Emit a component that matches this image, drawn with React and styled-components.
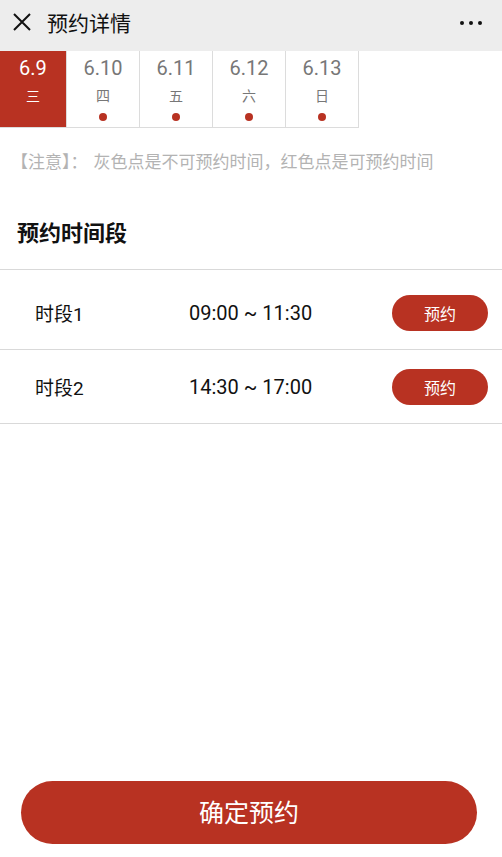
import React, { useState } from "react";
import styled, { createGlobalStyle } from "styled-components";

const Global = createGlobalStyle`
  html, body { margin: 0; padding: 0; background: #fff; }
  body {
    font-family: Roboto, "Noto Sans CJK SC", "Noto Sans", sans-serif;
    color: #111;
  }
`;

const RED = "#b83222";

const Page = styled.div`
  width: 502px;
  height: 857px;
  display: flex;
  flex-direction: column;
  background: #fff;
`;

const Header = styled.div`
  height: 51px;
  background: #ededed;
  display: flex;
  align-items: center;
  padding: 0 20px 8px 12px;
  box-sizing: border-box;
`;

const Close = styled.div`
  width: 20px;
  height: 20px;
  display: flex;
  margin-right: 15px;
`;

const Title = styled.div`
  font-size: 21px;
  color: #111;
  flex: 1;
`;

const More = styled.div`
  display: flex;
  gap: 5px;
  margin-top: 2px;
  span {
    width: 4px;
    height: 4px;
    border-radius: 50%;
    background: #111;
  }
`;

const Tabs = styled.div`
  display: flex;
`;

const Tab = styled.div`
  width: ${(p) => (p.first ? 66 : 72)}px;
  height: 76px;
  border-right: 1px solid #dcdcdc;
  border-bottom: 1px solid #dcdcdc;
  background: ${(p) => (p.active ? RED : "#fff")};
  color: ${(p) => (p.active ? "#fff" : "#777")};
  display: flex;
  flex-direction: column;
  align-items: center;
`;

const TabDate = styled.div`
  font-size: 20px;
  line-height: 24px;
  margin-top: 5px;
`;

const TabDay = styled.div`
  font-size: 14px;
  line-height: 16px;
  margin-top: 8px;
`;

const Dot = styled.div`
  width: 8px;
  height: 8px;
  border-radius: 50%;
  background: ${RED};
  margin-top: 9px;
`;

const Note = styled.div`
  font-family: "Noto Sans CJK SC", sans-serif;
  font-size: 17px;
  color: #b3b3b3;
  padding: 22px 0 0 11px;
  line-height: 22px;
  white-space: nowrap;
`;

const NoteLabel = styled.span`
  margin-right: 6px;
`;

const SectionTitle = styled.div`
  font-size: 22px;
  font-weight: bold;
  padding: 48px 0 0 17px;
  line-height: 28px;
  color: #111;
`;

const List = styled.div`
  margin-top: 21px;
  border-top: 1px solid #d9d9d9;
  padding-top: 6px;
`;

const Row = styled.div`
  height: 73px;
  border-bottom: 1px solid #d9d9d9;
  display: flex;
  align-items: center;
  font-size: 19px;
  color: #111;
`;

const RowName = styled.div`
  width: 154px;
  padding-left: 35px;
`;

const RowTime = styled.div`
  flex: 1;
  font-size: 20px;
`;

const SmallButton = styled.button`
  width: 96px;
  height: 36px;
  border: none;
  border-radius: 18px;
  background: ${RED};
  color: #fff;
  font-family: inherit;
  font-size: 16px;
  margin-right: 14px;
  padding: 0;
  cursor: pointer;
`;

const Spacer = styled.div`
  flex: 1;
`;

const Footer = styled.div`
  padding: 0 25px 13px 21px;
`;

const BigButton = styled.button`
  width: 100%;
  height: 63px;
  border: none;
  border-radius: 32px;
  background: ${RED};
  color: #fff;
  font-family: inherit;
  font-size: 25px;
  padding: 0 0 4px;
  cursor: pointer;
`;

const days = [
  { date: "6.9", day: "三" },
  { date: "6.10", day: "四" },
  { date: "6.11", day: "五" },
  { date: "6.12", day: "六" },
  { date: "6.13", day: "日" },
];

const slots = [
  { name: "时段1", time: "09:00 ~ 11:30" },
  { name: "时段2", time: "14:30 ~ 17:00" },
];

export default function App() {
  const [active, setActive] = useState(0);

  return (
    <Page>
      <Global />
      <Header>
        <Close>
          <svg width="20" height="20" viewBox="0 0 20 20">
            <path d="M2 2L18 18M18 2L2 18" stroke="#111" strokeWidth="2" />
          </svg>
        </Close>
        <Title>预约详情</Title>
        <More>
          <span />
          <span />
          <span />
        </More>
      </Header>

      <Tabs>
        {days.map((d, i) => (
          <Tab
            key={d.date}
            first={i === 0}
            active={i === active}
            onClick={() => setActive(i)}
          >
            <TabDate>{d.date}</TabDate>
            <TabDay>{d.day}</TabDay>
            {i !== active && <Dot />}
          </Tab>
        ))}
      </Tabs>

      <Note>
        <NoteLabel>【注意】：</NoteLabel>灰色点是不可预约时间，红色点是可预约时间
      </Note>

      <SectionTitle>预约时间段</SectionTitle>

      <List>
        {slots.map((s) => (
          <Row key={s.name}>
            <RowName>{s.name}</RowName>
            <RowTime>{s.time}</RowTime>
            <SmallButton>预约</SmallButton>
          </Row>
        ))}
      </List>

      <Spacer />

      <Footer>
        <BigButton>确定预约</BigButton>
      </Footer>
    </Page>
  );
}
